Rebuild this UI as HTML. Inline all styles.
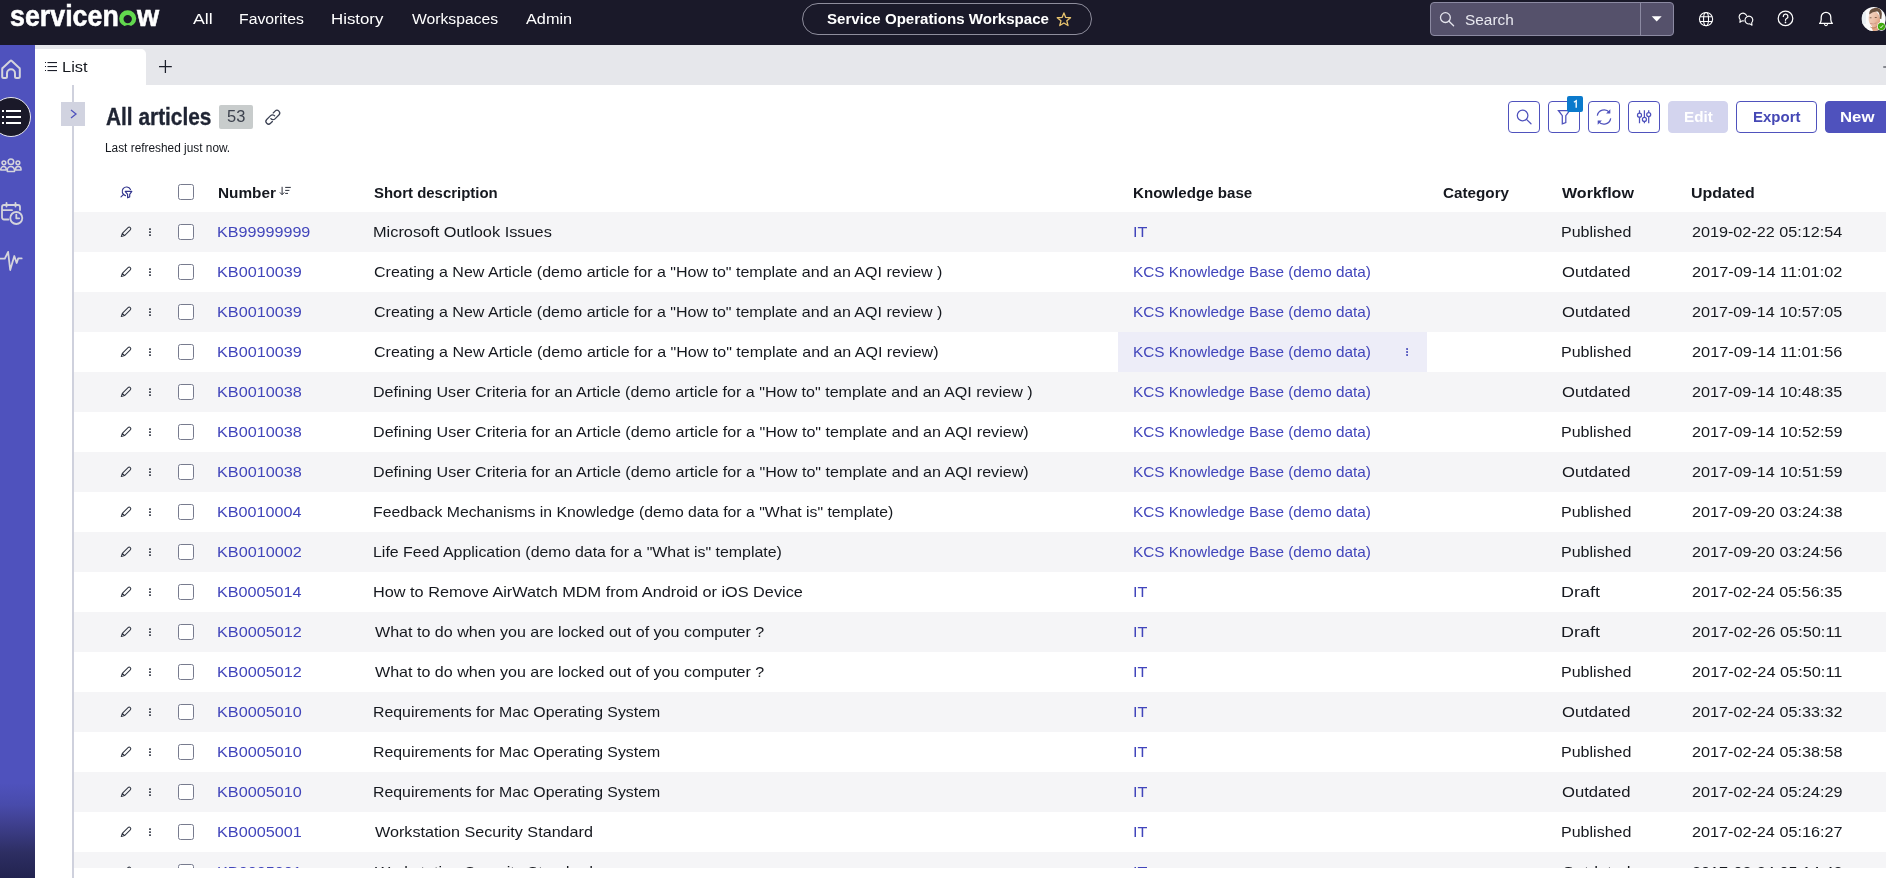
<!DOCTYPE html><html lang="en"><head><meta charset="utf-8"><title>All articles | Service Operations Workspace</title><style>
*{box-sizing:border-box;margin:0;padding:0}
html,body{width:1886px;height:878px;overflow:hidden;background:#fff;font-family:"Liberation Sans",sans-serif}
body{position:relative}
#w{position:absolute;left:0;top:0;width:1886px;height:878px;overflow:hidden;will-change:transform}
.a{position:absolute}
.t{position:absolute;white-space:pre;transform-origin:0 50%;display:block}
.i{position:absolute;overflow:visible;display:block}
#nav{left:0;top:0;width:1886px;height:45px;background:#1a1929}
#side{left:0;top:45px;width:35px;height:833px;background:linear-gradient(180deg,#4f52bd 0,#4f52bd 738px,#484bab 760px,#3f4090 778px,#2d2e62 808px,#222350 833px)}
#tabs{left:35px;top:45px;width:1851px;height:40px;background:#e6e7eb}
#tab{left:35px;top:49px;width:111px;height:36px;background:#fff;border-radius:0 5px 0 0}
#vline{left:72px;top:85px;width:2px;height:793px;background:#cfd1dd}
#tog{left:61px;top:102px;width:24px;height:24px;background:#d1d3e0}
#table{left:74px;top:172px;width:1812px;height:696px;overflow:hidden}
.row{position:absolute;left:0;width:1812px;height:40px}
.g{background:#f5f5f7}
.cb{position:absolute;width:16px;height:16px;border:1px solid #777b8e;border-radius:2.5px;background:#fff}
.btn{position:absolute;top:101px;height:32px;border:1px solid #4f52bd;border-radius:4px;background:#fff}
</style></head><body><div id="w">
<div id="nav" class="a"></div>
<span class="t" style="left:10.38px;top:0px;line-height:32px;font-size:29px;font-weight:700;color:#fff;transform:scaleX(0.9243);-webkit-text-stroke:0.55px #fff;">servicen</span>
<svg class="i" style="left:118px;top:9px;" width="20" height="19" viewBox="118 9 20 19"><path fill-rule="evenodd" fill="#62d84e" d="M119.15 18.45 A8.55 8.1 0 1 0 136.25 18.45 A8.55 8.1 0 1 0 119.15 18.45 Z M123.5 19.1 A4.2 4.2 0 1 0 131.9 19.1 A4.2 4.2 0 1 0 123.5 19.1 Z"/><path d="M123.4 27.2 Q127.9 22.6 132.6 27.2 Z" fill="#1a1929"/></svg>
<span class="t" style="left:136.60px;top:0px;line-height:32px;font-size:29px;font-weight:700;color:#fff;transform:scaleX(0.9822);-webkit-text-stroke:0.55px #fff;">w</span>
<span class="t" style="left:192.80px;top:10px;line-height:17px;font-size:15.5px;color:#fff;transform:scaleX(1.1446);">All</span>
<span class="t" style="left:239.13px;top:10px;line-height:17px;font-size:15.5px;color:#fff;transform:scaleX(1.0177);">Favorites</span>
<span class="t" style="left:331.44px;top:10px;line-height:17px;font-size:15.5px;color:#fff;transform:scaleX(1.0851);">History</span>
<span class="t" style="left:411.85px;top:10px;line-height:17px;font-size:15.5px;color:#fff;transform:scaleX(1.0125);">Workspaces</span>
<span class="t" style="left:526.40px;top:10px;line-height:17px;font-size:15.5px;color:#fff;transform:scaleX(1.0488);">Admin</span>
<div class="a" style="left:802px;top:3px;width:290px;height:32px;border:1px solid #8e8d9c;border-radius:16px"></div>
<span class="t" style="left:826.71px;top:10px;line-height:17px;font-size:15.5px;font-weight:700;color:#fff;transform:scaleX(0.9736);">Service Operations Workspace</span>
<svg class="i" style="left:1054px;top:9px;" width="22" height="22" viewBox="1054 9 22 22"><polygon points="1063.90,12.90 1065.72,17.39 1070.56,17.74 1066.85,20.86 1068.01,25.56 1063.90,23.00 1059.79,25.56 1060.95,20.86 1057.24,17.74 1062.08,17.39" fill="none" stroke="#e9c46e" stroke-width="1.3" stroke-linejoin="round"/></svg>
<div class="a" style="left:1430px;top:2px;width:244px;height:34px;border:1px solid #8c8aa2;border-radius:4px;background:#55516b"></div>
<div class="a" style="left:1640px;top:3px;width:1px;height:32px;background:#8c8aa2"></div>
<svg class="i" style="left:1436px;top:9px;" width="22" height="22" viewBox="1436 9 22 22"><circle cx="1445.4" cy="17.6" r="4.9" fill="none" stroke="#e6e6ee" stroke-width="1.3"/><path d="M1449 21.3 L1453.6 25.8" stroke="#e6e6ee" stroke-width="1.3" stroke-linecap="round"/></svg>
<svg class="i" style="left:1648px;top:12px;" width="18" height="14" viewBox="1648 12 18 14"><path d="M1651.7 16.3 H1661.7 L1656.7 21.6 Z" fill="#fff"/></svg>
<span class="t" style="left:1464.76px;top:11px;line-height:17px;font-size:15.5px;color:#e9e9f0;transform:scaleX(0.9926);">Search</span>
<svg class="i" style="left:1696px;top:9px;" width="20" height="20" viewBox="1696 9 20 20"><circle cx="1706.05" cy="19.1" r="6.6" fill="none" stroke="#fff" stroke-width="1.1"/><ellipse cx="1706.05" cy="19.1" rx="2.5" ry="6.6" fill="none" stroke="#fff" stroke-width="1.1"/><path d="M1699.9 16.7 H1712.2 M1699.9 21.5 H1712.2" fill="none" stroke="#fff" stroke-width="1.1"/></svg>
<svg class="i" style="left:1736px;top:9px;" width="20" height="20" viewBox="1736 9 20 20"><path d="M1742 20.87 L1739.9 22.3 L1740.24 19.86 A3.9 3.9 0 1 1 1742 20.87 Z" fill="#1a1929" stroke="#fff" stroke-width="1.15" stroke-linejoin="round"/><circle cx="1748.9" cy="20.1" r="4.2" fill="#1a1929" stroke="#1a1929" stroke-width="1.1"/><path d="M1751.66 22.86 L1752 25.2 L1749.91 23.87 A3.9 3.9 0 1 1 1751.66 22.86 Z" fill="#1a1929" stroke="#fff" stroke-width="1.15" stroke-linejoin="round"/></svg>
<svg class="i" style="left:1775px;top:8px;" width="22" height="22" viewBox="1775 8 22 22"><circle cx="1785.5" cy="18.4" r="7.3" fill="none" stroke="#fff" stroke-width="1.25"/><path d="M1783.3 16.5 A2.3 2.3 0 1 1 1786.6 18.5 Q1785.5 19.1 1785.5 20.3" fill="none" stroke="#fff" stroke-width="1.25" stroke-linecap="round"/><circle cx="1785.5" cy="22.4" r="0.85" fill="#fff"/></svg>
<svg class="i" style="left:1816px;top:9px;" width="20" height="20" viewBox="1816 9 20 20"><path d="M1819.6 23.4 Q1821.2 22 1821.2 19.6 V17.2 A4.8 4.8 0 0 1 1830.8 17.2 V19.6 Q1830.8 22 1832.4 23.4 Z" fill="none" stroke="#fff" stroke-width="1.25" stroke-linejoin="round" stroke-linecap="round"/><path d="M1824.6 24.6 A1.5 1.5 0 0 0 1827.4 24.6" fill="none" stroke="#fff" stroke-width="1.25" stroke-linejoin="round" stroke-linecap="round"/></svg>
<svg class="i" style="left:1858px;top:4px;" width="28" height="32" viewBox="1858 4 28 32"><defs><clipPath id="avc"><circle cx="1873.7" cy="19" r="12"/></clipPath><filter id="avb" x="-20%" y="-20%" width="140%" height="140%"><feGaussianBlur stdDeviation="0.45"/></filter><linearGradient id="avs" x1="0" y1="0" x2="1" y2="1"><stop offset="0" stop-color="#f6dccd"/><stop offset="0.6" stop-color="#e9b99f"/><stop offset="1" stop-color="#cf8a63"/></linearGradient></defs><g clip-path="url(#avc)"><rect x="1860" y="5" width="28" height="28" fill="#fafafa"/><g filter="url(#avb)"><rect x="1862" y="12" width="4" height="12" fill="#e8eef2"/><path d="M1872.3 26 L1878.4 24.5 L1879.2 33 L1871.6 33 Z" fill="#dea27e"/><path d="M1864 33 L1866 29.5 L1872 28.5 L1873.5 33 Z" fill="#fdfdfd"/><ellipse cx="1874.3" cy="19.3" rx="5.7" ry="8.3" transform="rotate(-9 1874.3 19.3)" fill="url(#avs)"/><path d="M1869.2 14.4 Q1868.8 8.6 1874.6 7.9 Q1881.4 7.4 1881.9 13.8 L1881.3 19.2 L1879.7 18.6 Q1880.1 13.4 1877.6 11.6 Q1873.2 11.2 1869.2 14.4 Z" fill="#6b5140"/><ellipse cx="1870.6" cy="17.8" rx="1.1" ry="0.55" fill="#7a5a48"/><ellipse cx="1875.8" cy="17.5" rx="1.2" ry="0.55" fill="#7a5a48"/><path d="M1870.2 23.4 Q1873 25.9 1876.4 23 Q1873 24.2 1870.2 23.4 Z" fill="#fff" stroke="#c27f68" stroke-width="0.5"/><path d="M1870.4 27 Q1873.4 29.6 1877.6 26" fill="none" stroke="#b9805f" stroke-width="0.9"/></g></g><circle cx="1881.45" cy="26.4" r="4.3" fill="#fff"/><circle cx="1881.45" cy="26.4" r="3.6" fill="#3fa80d"/><path d="M1880 26.7 L1881 27.7 L1883 25.3" fill="none" stroke="#fff" stroke-width="0.95"/></svg>
<div id="side" class="a"></div>
<svg class="i" style="left:0px;top:0px;" width="35" height="140" viewBox="0 0 35 140"><path d="M2.2 76.4 V68.9 Q2.2 68.3 2.7 67.9 L10.2 60.9 Q11 60.2 11.8 60.9 L19.3 67.9 Q19.8 68.3 19.8 68.9 V76.4 Q19.8 77.9 18.3 77.9 H16.5 Q15 77.9 15 76.4 V73.2 A4 4 0 0 0 7 73.2 V76.4 Q7 77.9 5.5 77.9 H3.7 Q2.2 77.9 2.2 76.4 Z" fill="none" stroke="#d4d4dc" stroke-width="2" stroke-linejoin="round"/></svg>
<svg class="i" style="left:0px;top:90px;" width="35" height="60" viewBox="0 90 35 60"><circle cx="11" cy="117" r="19.5" fill="#1a1929" stroke="#e8e8f0" stroke-width="1"/><rect x="2" y="110" width="2" height="2" fill="#fff"/><rect x="6" y="110" width="15" height="2" fill="#fff"/><rect x="2" y="116" width="2" height="2" fill="#fff"/><rect x="6" y="116" width="15" height="2" fill="#fff"/><rect x="2" y="122" width="2" height="2" fill="#fff"/><rect x="6" y="122" width="15" height="2" fill="#fff"/></svg>
<svg class="i" style="left:0px;top:150px;" width="35" height="30" viewBox="0 150 35 30"><circle cx="3.9" cy="162.8" r="1.9" fill="#4f52bd" stroke="#d4d4dc" stroke-width="1.5" stroke-linejoin="round" stroke-linecap="round"/><circle cx="17.9" cy="162.8" r="1.9" fill="#4f52bd" stroke="#d4d4dc" stroke-width="1.5" stroke-linejoin="round" stroke-linecap="round"/><path d="M0.75 169.9 V169.35 A2.75 2.75 0 0 1 6.25 169.35 V169.9 Z" fill="#4f52bd" stroke="#d4d4dc" stroke-width="1.5" stroke-linejoin="round" stroke-linecap="round"/><path d="M15.55 169.9 V169.35 A2.75 2.75 0 0 1 21.05 169.35 V169.9 Z" fill="#4f52bd" stroke="#d4d4dc" stroke-width="1.5" stroke-linejoin="round" stroke-linecap="round"/><circle cx="10.9" cy="161.8" r="2.8" fill="#4f52bd" stroke="#d4d4dc" stroke-width="1.5" stroke-linejoin="round" stroke-linecap="round"/><path d="M7.3 171.5 V170.2 A3.6 3.6 0 0 1 14.5 170.2 V171.5 Z" fill="#4f52bd" stroke="#d4d4dc" stroke-width="1.5" stroke-linejoin="round" stroke-linecap="round"/></svg>
<svg class="i" style="left:0px;top:198px;" width="35" height="30" viewBox="0 198 35 30"><path d="M8.5 219.5 H4 A2 2 0 0 1 2 217.5 V207 A2 2 0 0 1 4 205 H18 A2 2 0 0 1 20 207 V210 M2 210.2 H12 M6.5 202.8 V206.5 M15.5 202.8 V206.5" fill="none" stroke="#d4d4dc" stroke-width="1.8" stroke-linejoin="round" stroke-linecap="round"/><circle cx="16.3" cy="218" r="6" fill="none" stroke="#d4d4dc" stroke-width="1.8" stroke-linejoin="round" stroke-linecap="round"/><path d="M16.3 214.6 V218.3 H19.2" fill="none" stroke="#d4d4dc" stroke-width="1.8" stroke-linejoin="round" stroke-linecap="round"/></svg>
<svg class="i" style="left:0px;top:248px;" width="35" height="26" viewBox="0 248 35 26"><path d="M0 258.7 H4.8 L8.1 251.9 L10.2 270 L14.3 256 L16.7 263 L18.2 258.4 H21.7" fill="none" stroke="#d4d4dc" stroke-width="1.8" stroke-linejoin="round" stroke-linecap="round"/></svg>
<div id="tabs" class="a"></div><div id="tab" class="a"></div>
<svg class="i" style="left:40px;top:58px;" width="24" height="18" viewBox="40 58 24 18"><rect x="45" y="62.0" width="1" height="1" fill="#1c1f2b"/><rect x="47.5" y="62.0" width="9.5" height="1.1" fill="#1c1f2b"/><rect x="45" y="66.0" width="1" height="1" fill="#1c1f2b"/><rect x="47.5" y="66.0" width="9.5" height="1.1" fill="#1c1f2b"/><rect x="45" y="70.0" width="1" height="1" fill="#1c1f2b"/><rect x="47.5" y="70.0" width="9.5" height="1.1" fill="#1c1f2b"/></svg>
<span class="t" style="left:62.43px;top:58px;line-height:17px;font-size:15px;color:#15181e;transform:scaleX(1.0955);">List</span>
<svg class="i" style="left:155px;top:56px;" width="22" height="22" viewBox="155 56 22 22"><path d="M159 66.5 H171.8 M165.4 60.1 V72.9" stroke="#1c1f2b" stroke-width="1.25" fill="none"/></svg>
<div class="a" style="left:1883px;top:66px;width:4px;height:2px;border-radius:1px;background:#85878e"></div>
<div id="vline" class="a"></div><div id="tog" class="a"></div>
<svg class="i" style="left:61px;top:102px;" width="24" height="24" viewBox="0 0 24 24"><path d="M10 8 L15 12 L10 16" fill="none" stroke="#4f52bd" stroke-width="1.3"/></svg>
<span class="t" style="left:105.85px;top:103px;line-height:27px;font-size:24px;font-weight:700;color:#1f2433;transform:scaleX(0.8685);-webkit-text-stroke:0.35px #1f2433;">All articles</span>
<div class="a" style="left:219px;top:105px;width:34px;height:24px;border-radius:2px;background:#c8cccc"></div>
<span class="t" style="left:226.93px;top:108px;line-height:17px;font-size:16px;color:#3d424e;transform:scaleX(1.0277);">53</span>
<svg class="i" style="left:262px;top:106px;" width="22" height="22" viewBox="262 106 22 22"><g transform="translate(272.8 117.2) rotate(-45)"><path d="M-2.3 -0.4 A2.7 2.7 0 0 0 0.4 2.7 H5.9 A2.7 2.7 0 0 0 5.9 -2.7 H3.3" fill="none" stroke="#3b4153" stroke-width="1.25" stroke-linecap="round"/><path d="M2.3 0.4 A2.7 2.7 0 0 0 -0.4 -2.7 H-5.9 A2.7 2.7 0 0 0 -5.9 2.7 H-3.3" fill="none" stroke="#3b4153" stroke-width="1.25" stroke-linecap="round"/></g></svg>
<span class="t" style="left:105.41px;top:141px;line-height:14px;font-size:12px;color:#15181e;transform:scaleX(0.9876);">Last refreshed just now.</span>
<div class="btn" style="left:1508px;width:32px"></div>
<div class="btn" style="left:1548px;width:32px"></div>
<div class="btn" style="left:1588px;width:32px"></div>
<div class="btn" style="left:1628px;width:32px"></div>
<svg class="i" style="left:1508px;top:101px;" width="32" height="32" viewBox="0 0 32 32"><circle cx="14.6" cy="14.5" r="5.3" fill="none" stroke="#4f52bd" stroke-width="1.25"/><path d="M18.5 18.4 L23 22.8" stroke="#4f52bd" stroke-width="1.25" stroke-linecap="round"/></svg>
<svg class="i" style="left:1548px;top:101px;" width="32" height="32" viewBox="0 0 32 32"><path d="M10.4 9.5 H21.6 L17.8 14.6 V21.5 L14.3 22.8 V14.6 Z" fill="none" stroke="#4f52bd" stroke-width="1.25" stroke-linejoin="miter"/></svg>
<svg class="i" style="left:1588px;top:101px;" width="32" height="32" viewBox="0 0 32 32"><path d="M9.3 14.6 A6.9 6.9 0 0 1 21.4 11.3" fill="none" stroke="#4f52bd" stroke-width="1.25"/><path d="M22.7 17.4 A6.9 6.9 0 0 1 10.6 20.7" fill="none" stroke="#4f52bd" stroke-width="1.25"/><path d="M22.3 8.2 V12.4 H18.1 Z" fill="#4f52bd"/><path d="M9.7 23.8 V19.6 H13.9 Z" fill="#4f52bd"/></svg>
<svg class="i" style="left:1628px;top:101px;" width="32" height="32" viewBox="0 0 32 32"><path d="M11.5 9.3 V22.3 M16.4 9.3 V22.3 M20.7 9.3 V22.3" fill="none" stroke="#4f52bd" stroke-width="1.25"/><circle cx="11.5" cy="14.2" r="2" fill="#fff" stroke="#4f52bd" stroke-width="1.25"/><circle cx="16.4" cy="18.4" r="2" fill="#fff" stroke="#4f52bd" stroke-width="1.25"/><circle cx="20.7" cy="13.6" r="2" fill="#fff" stroke="#4f52bd" stroke-width="1.25"/></svg>
<div class="a" style="left:1567px;top:96px;width:16px;height:16px;border-radius:2px;background:#0b7acc"></div>
<svg class="i" style="left:1567px;top:96px" width="16" height="16" viewBox="0 0 16 16"><path d="M6.9 6.2 L9.2 4.7 V11.7" fill="none" stroke="#fff" stroke-width="1.35"/></svg>
<div class="btn" style="left:1668px;width:60px;border-color:#d3d4ee;background:#d3d4ee"></div>
<span class="t" style="left:1683.72px;top:108px;line-height:17px;font-size:15.5px;font-weight:700;color:#fff;transform:scaleX(0.9821);">Edit</span>
<div class="btn" style="left:1736px;width:81px"></div>
<span class="t" style="left:1752.63px;top:108px;line-height:17px;font-size:15.5px;font-weight:700;color:#4548b5;transform:scaleX(0.9667);">Export</span>
<div class="btn" style="left:1825px;width:66px;background:#4f52bd"></div>
<span class="t" style="left:1840.42px;top:108px;line-height:17px;font-size:15.5px;font-weight:700;color:#fff;transform:scaleX(1.0797);">New</span>
<div id="table" class="a">
<span class="t" style="left:143.68px;top:12px;line-height:17px;font-size:15px;font-weight:700;color:#15181f;transform:scaleX(1.0234);">Number</span>
<span class="t" style="left:299.60px;top:12px;line-height:17px;font-size:15px;font-weight:700;color:#15181f;transform:scaleX(0.9963);">Short description</span>
<span class="t" style="left:1058.99px;top:12px;line-height:17px;font-size:15px;font-weight:700;color:#15181f;transform:scaleX(1.0073);">Knowledge base</span>
<span class="t" style="left:1368.54px;top:12px;line-height:17px;font-size:15px;font-weight:700;color:#15181f;transform:scaleX(1.0156);">Category</span>
<span class="t" style="left:1488.00px;top:12px;line-height:17px;font-size:15px;font-weight:700;color:#15181f;transform:scaleX(1.0691);">Workflow</span>
<span class="t" style="left:1617.34px;top:12px;line-height:17px;font-size:15px;font-weight:700;color:#15181f;transform:scaleX(1.0621);">Updated</span>
<div class="cb" style="left:104px;top:12px"></div>
<div class="row g" style="top:40px"></div>
<div class="cb" style="left:104px;top:52px"></div>
<span class="t" style="left:143.45px;top:51px;line-height:17px;font-size:15px;color:#4145bb;transform:scaleX(1.0761);">KB99999999</span>
<span class="t" style="left:299.24px;top:51px;line-height:17px;font-size:15px;color:#15181e;transform:scaleX(1.0892);">Microsoft Outlook Issues</span>
<span class="t" style="left:1058.98px;top:51px;line-height:17px;font-size:15px;color:#4145bb;transform:scaleX(1.0783);">IT</span>
<span class="t" style="left:1487.26px;top:51px;line-height:17px;font-size:15px;color:#15181e;transform:scaleX(1.0682);">Published</span>
<span class="t" style="left:1617.99px;top:51px;line-height:17px;font-size:15px;color:#15181e;transform:scaleX(1.0783);">2019-02-22 05:12:54</span>
<div class="row" style="top:80px"></div>
<div class="cb" style="left:104px;top:92px"></div>
<span class="t" style="left:143.45px;top:91px;line-height:17px;font-size:15px;color:#4145bb;transform:scaleX(1.0824);">KB0010039</span>
<span class="t" style="left:299.80px;top:91px;line-height:17px;font-size:15px;color:#15181e;transform:scaleX(1.0674);">Creating a New Article (demo article for a "How to" template and an AQI review )</span>
<span class="t" style="left:1059.22px;top:91px;line-height:17px;font-size:15px;color:#4145bb;transform:scaleX(1.0226);">KCS Knowledge Base (demo data)</span>
<span class="t" style="left:1487.77px;top:91px;line-height:17px;font-size:15px;color:#15181e;transform:scaleX(1.1100);">Outdated</span>
<span class="t" style="left:1617.98px;top:91px;line-height:17px;font-size:15px;color:#15181e;transform:scaleX(1.0881);">2017-09-14 11:01:02</span>
<div class="row g" style="top:120px"></div>
<div class="cb" style="left:104px;top:132px"></div>
<span class="t" style="left:143.45px;top:131px;line-height:17px;font-size:15px;color:#4145bb;transform:scaleX(1.0824);">KB0010039</span>
<span class="t" style="left:299.80px;top:131px;line-height:17px;font-size:15px;color:#15181e;transform:scaleX(1.0674);">Creating a New Article (demo article for a "How to" template and an AQI review )</span>
<span class="t" style="left:1059.22px;top:131px;line-height:17px;font-size:15px;color:#4145bb;transform:scaleX(1.0226);">KCS Knowledge Base (demo data)</span>
<span class="t" style="left:1487.77px;top:131px;line-height:17px;font-size:15px;color:#15181e;transform:scaleX(1.1100);">Outdated</span>
<span class="t" style="left:1617.99px;top:131px;line-height:17px;font-size:15px;color:#15181e;transform:scaleX(1.0783);">2017-09-14 10:57:05</span>
<div class="row" style="top:160px"></div>
<div class="a" style="left:1044px;top:160px;width:309px;height:40px;background:#ededf8"></div>
<div class="cb" style="left:104px;top:172px"></div>
<span class="t" style="left:143.45px;top:171px;line-height:17px;font-size:15px;color:#4145bb;transform:scaleX(1.0824);">KB0010039</span>
<span class="t" style="left:299.80px;top:171px;line-height:17px;font-size:15px;color:#15181e;transform:scaleX(1.0684);">Creating a New Article (demo article for a "How to" template and an AQI review)</span>
<span class="t" style="left:1059.22px;top:171px;line-height:17px;font-size:15px;color:#4145bb;transform:scaleX(1.0226);">KCS Knowledge Base (demo data)</span>
<span class="t" style="left:1487.26px;top:171px;line-height:17px;font-size:15px;color:#15181e;transform:scaleX(1.0682);">Published</span>
<span class="t" style="left:1617.98px;top:171px;line-height:17px;font-size:15px;color:#15181e;transform:scaleX(1.0881);">2017-09-14 11:01:56</span>
<div class="row g" style="top:200px"></div>
<div class="cb" style="left:104px;top:212px"></div>
<span class="t" style="left:143.45px;top:211px;line-height:17px;font-size:15px;color:#4145bb;transform:scaleX(1.0824);">KB0010038</span>
<span class="t" style="left:299.26px;top:211px;line-height:17px;font-size:15px;color:#15181e;transform:scaleX(1.0724);">Defining User Criteria for an Article (demo article for a "How to" template and an AQI review )</span>
<span class="t" style="left:1059.22px;top:211px;line-height:17px;font-size:15px;color:#4145bb;transform:scaleX(1.0226);">KCS Knowledge Base (demo data)</span>
<span class="t" style="left:1487.77px;top:211px;line-height:17px;font-size:15px;color:#15181e;transform:scaleX(1.1100);">Outdated</span>
<span class="t" style="left:1617.99px;top:211px;line-height:17px;font-size:15px;color:#15181e;transform:scaleX(1.0783);">2017-09-14 10:48:35</span>
<div class="row" style="top:240px"></div>
<div class="cb" style="left:104px;top:252px"></div>
<span class="t" style="left:143.45px;top:251px;line-height:17px;font-size:15px;color:#4145bb;transform:scaleX(1.0824);">KB0010038</span>
<span class="t" style="left:299.26px;top:251px;line-height:17px;font-size:15px;color:#15181e;transform:scaleX(1.0733);">Defining User Criteria for an Article (demo article for a "How to" template and an AQI review)</span>
<span class="t" style="left:1059.22px;top:251px;line-height:17px;font-size:15px;color:#4145bb;transform:scaleX(1.0226);">KCS Knowledge Base (demo data)</span>
<span class="t" style="left:1487.26px;top:251px;line-height:17px;font-size:15px;color:#15181e;transform:scaleX(1.0682);">Published</span>
<span class="t" style="left:1617.99px;top:251px;line-height:17px;font-size:15px;color:#15181e;transform:scaleX(1.0802);">2017-09-14 10:52:59</span>
<div class="row g" style="top:280px"></div>
<div class="cb" style="left:104px;top:292px"></div>
<span class="t" style="left:143.45px;top:291px;line-height:17px;font-size:15px;color:#4145bb;transform:scaleX(1.0824);">KB0010038</span>
<span class="t" style="left:299.26px;top:291px;line-height:17px;font-size:15px;color:#15181e;transform:scaleX(1.0733);">Defining User Criteria for an Article (demo article for a "How to" template and an AQI review)</span>
<span class="t" style="left:1059.22px;top:291px;line-height:17px;font-size:15px;color:#4145bb;transform:scaleX(1.0226);">KCS Knowledge Base (demo data)</span>
<span class="t" style="left:1487.77px;top:291px;line-height:17px;font-size:15px;color:#15181e;transform:scaleX(1.1100);">Outdated</span>
<span class="t" style="left:1617.99px;top:291px;line-height:17px;font-size:15px;color:#15181e;transform:scaleX(1.0802);">2017-09-14 10:51:59</span>
<div class="row" style="top:320px"></div>
<div class="cb" style="left:104px;top:332px"></div>
<span class="t" style="left:143.45px;top:331px;line-height:17px;font-size:15px;color:#4145bb;transform:scaleX(1.0788);">KB0010004</span>
<span class="t" style="left:299.28px;top:331px;line-height:17px;font-size:15px;color:#15181e;transform:scaleX(1.0526);">Feedback Mechanisms in Knowledge (demo data for a "What is" template)</span>
<span class="t" style="left:1059.22px;top:331px;line-height:17px;font-size:15px;color:#4145bb;transform:scaleX(1.0226);">KCS Knowledge Base (demo data)</span>
<span class="t" style="left:1487.26px;top:331px;line-height:17px;font-size:15px;color:#15181e;transform:scaleX(1.0682);">Published</span>
<span class="t" style="left:1617.99px;top:331px;line-height:17px;font-size:15px;color:#15181e;transform:scaleX(1.0802);">2017-09-20 03:24:38</span>
<div class="row g" style="top:360px"></div>
<div class="cb" style="left:104px;top:372px"></div>
<span class="t" style="left:143.45px;top:371px;line-height:17px;font-size:15px;color:#4145bb;transform:scaleX(1.0824);">KB0010002</span>
<span class="t" style="left:299.27px;top:371px;line-height:17px;font-size:15px;color:#15181e;transform:scaleX(1.0621);">Life Feed Application (demo data for a "What is" template)</span>
<span class="t" style="left:1059.22px;top:371px;line-height:17px;font-size:15px;color:#4145bb;transform:scaleX(1.0226);">KCS Knowledge Base (demo data)</span>
<span class="t" style="left:1487.26px;top:371px;line-height:17px;font-size:15px;color:#15181e;transform:scaleX(1.0682);">Published</span>
<span class="t" style="left:1617.99px;top:371px;line-height:17px;font-size:15px;color:#15181e;transform:scaleX(1.0802);">2017-09-20 03:24:56</span>
<div class="row" style="top:400px"></div>
<div class="cb" style="left:104px;top:412px"></div>
<span class="t" style="left:143.45px;top:411px;line-height:17px;font-size:15px;color:#4145bb;transform:scaleX(1.0788);">KB0005014</span>
<span class="t" style="left:299.24px;top:411px;line-height:17px;font-size:15px;color:#15181e;transform:scaleX(1.0848);">How to Remove AirWatch MDM from Android or iOS Device</span>
<span class="t" style="left:1058.98px;top:411px;line-height:17px;font-size:15px;color:#4145bb;transform:scaleX(1.0783);">IT</span>
<span class="t" style="left:1487.10px;top:411px;line-height:17px;font-size:15px;color:#15181e;transform:scaleX(1.1968);">Draft</span>
<span class="t" style="left:1617.99px;top:411px;line-height:17px;font-size:15px;color:#15181e;transform:scaleX(1.0783);">2017-02-24 05:56:35</span>
<div class="row g" style="top:440px"></div>
<div class="cb" style="left:104px;top:452px"></div>
<span class="t" style="left:143.45px;top:451px;line-height:17px;font-size:15px;color:#4145bb;transform:scaleX(1.0824);">KB0005012</span>
<span class="t" style="left:300.60px;top:451px;line-height:17px;font-size:15px;color:#15181e;transform:scaleX(1.0708);">What to do when you are locked out of you computer ?</span>
<span class="t" style="left:1058.98px;top:451px;line-height:17px;font-size:15px;color:#4145bb;transform:scaleX(1.0783);">IT</span>
<span class="t" style="left:1487.10px;top:451px;line-height:17px;font-size:15px;color:#15181e;transform:scaleX(1.1968);">Draft</span>
<span class="t" style="left:1617.98px;top:451px;line-height:17px;font-size:15px;color:#15181e;transform:scaleX(1.0881);">2017-02-26 05:50:11</span>
<div class="row" style="top:480px"></div>
<div class="cb" style="left:104px;top:492px"></div>
<span class="t" style="left:143.45px;top:491px;line-height:17px;font-size:15px;color:#4145bb;transform:scaleX(1.0824);">KB0005012</span>
<span class="t" style="left:300.60px;top:491px;line-height:17px;font-size:15px;color:#15181e;transform:scaleX(1.0708);">What to do when you are locked out of you computer ?</span>
<span class="t" style="left:1058.98px;top:491px;line-height:17px;font-size:15px;color:#4145bb;transform:scaleX(1.0783);">IT</span>
<span class="t" style="left:1487.26px;top:491px;line-height:17px;font-size:15px;color:#15181e;transform:scaleX(1.0682);">Published</span>
<span class="t" style="left:1617.98px;top:491px;line-height:17px;font-size:15px;color:#15181e;transform:scaleX(1.0881);">2017-02-24 05:50:11</span>
<div class="row g" style="top:520px"></div>
<div class="cb" style="left:104px;top:532px"></div>
<span class="t" style="left:143.45px;top:531px;line-height:17px;font-size:15px;color:#4145bb;transform:scaleX(1.0824);">KB0005010</span>
<span class="t" style="left:299.28px;top:531px;line-height:17px;font-size:15px;color:#15181e;transform:scaleX(1.0568);">Requirements for Mac Operating System</span>
<span class="t" style="left:1058.98px;top:531px;line-height:17px;font-size:15px;color:#4145bb;transform:scaleX(1.0783);">IT</span>
<span class="t" style="left:1487.77px;top:531px;line-height:17px;font-size:15px;color:#15181e;transform:scaleX(1.1100);">Outdated</span>
<span class="t" style="left:1617.99px;top:531px;line-height:17px;font-size:15px;color:#15181e;transform:scaleX(1.0802);">2017-02-24 05:33:32</span>
<div class="row" style="top:560px"></div>
<div class="cb" style="left:104px;top:572px"></div>
<span class="t" style="left:143.45px;top:571px;line-height:17px;font-size:15px;color:#4145bb;transform:scaleX(1.0824);">KB0005010</span>
<span class="t" style="left:299.28px;top:571px;line-height:17px;font-size:15px;color:#15181e;transform:scaleX(1.0568);">Requirements for Mac Operating System</span>
<span class="t" style="left:1058.98px;top:571px;line-height:17px;font-size:15px;color:#4145bb;transform:scaleX(1.0783);">IT</span>
<span class="t" style="left:1487.26px;top:571px;line-height:17px;font-size:15px;color:#15181e;transform:scaleX(1.0682);">Published</span>
<span class="t" style="left:1617.99px;top:571px;line-height:17px;font-size:15px;color:#15181e;transform:scaleX(1.0802);">2017-02-24 05:38:58</span>
<div class="row g" style="top:600px"></div>
<div class="cb" style="left:104px;top:612px"></div>
<span class="t" style="left:143.45px;top:611px;line-height:17px;font-size:15px;color:#4145bb;transform:scaleX(1.0824);">KB0005010</span>
<span class="t" style="left:299.28px;top:611px;line-height:17px;font-size:15px;color:#15181e;transform:scaleX(1.0568);">Requirements for Mac Operating System</span>
<span class="t" style="left:1058.98px;top:611px;line-height:17px;font-size:15px;color:#4145bb;transform:scaleX(1.0783);">IT</span>
<span class="t" style="left:1487.77px;top:611px;line-height:17px;font-size:15px;color:#15181e;transform:scaleX(1.1100);">Outdated</span>
<span class="t" style="left:1617.99px;top:611px;line-height:17px;font-size:15px;color:#15181e;transform:scaleX(1.0802);">2017-02-24 05:24:29</span>
<div class="row" style="top:640px"></div>
<div class="cb" style="left:104px;top:652px"></div>
<span class="t" style="left:143.45px;top:651px;line-height:17px;font-size:15px;color:#4145bb;transform:scaleX(1.0824);">KB0005001</span>
<span class="t" style="left:300.60px;top:651px;line-height:17px;font-size:15px;color:#15181e;transform:scaleX(1.0773);">Workstation Security Standard</span>
<span class="t" style="left:1058.98px;top:651px;line-height:17px;font-size:15px;color:#4145bb;transform:scaleX(1.0783);">IT</span>
<span class="t" style="left:1487.26px;top:651px;line-height:17px;font-size:15px;color:#15181e;transform:scaleX(1.0682);">Published</span>
<span class="t" style="left:1617.99px;top:651px;line-height:17px;font-size:15px;color:#15181e;transform:scaleX(1.0802);">2017-02-24 05:16:27</span>
<div class="row g" style="top:680px"></div>
<div class="cb" style="left:104px;top:692px"></div>
<span class="t" style="left:143.45px;top:691px;line-height:17px;font-size:15px;color:#4145bb;transform:scaleX(1.0824);">KB0005001</span>
<span class="t" style="left:300.60px;top:691px;line-height:17px;font-size:15px;color:#15181e;transform:scaleX(1.0773);">Workstation Security Standard</span>
<span class="t" style="left:1058.98px;top:691px;line-height:17px;font-size:15px;color:#4145bb;transform:scaleX(1.0783);">IT</span>
<span class="t" style="left:1487.77px;top:691px;line-height:17px;font-size:15px;color:#15181e;transform:scaleX(1.1100);">Outdated</span>
<span class="t" style="left:1617.99px;top:691px;line-height:17px;font-size:15px;color:#15181e;transform:scaleX(1.0802);">2017-02-24 05:14:42</span>
<svg class="i" style="left:0;top:0" width="1812" height="720" viewBox="0 0 1812 720"><g transform="translate(47.1 64.75) rotate(-45)"><path d="M0.2 0 L3.3 -1.6 H11.4 A1.6 1.6 0 0 1 11.4 1.6 H3.3 Z M3.3 -1.6 V1.6" fill="none" stroke="#2e3340" stroke-width="1" stroke-linejoin="round"/></g><rect x="75.1" y="56.29999999999999" width="1.8" height="1.8" rx="0.3" fill="#3a3f4c"/><rect x="75.1" y="59.29999999999999" width="1.8" height="1.8" rx="0.3" fill="#3a3f4c"/><rect x="75.1" y="62.29999999999999" width="1.8" height="1.8" rx="0.3" fill="#3a3f4c"/><g transform="translate(47.1 104.75) rotate(-45)"><path d="M0.2 0 L3.3 -1.6 H11.4 A1.6 1.6 0 0 1 11.4 1.6 H3.3 Z M3.3 -1.6 V1.6" fill="none" stroke="#2e3340" stroke-width="1" stroke-linejoin="round"/></g><rect x="75.1" y="96.29999999999998" width="1.8" height="1.8" rx="0.3" fill="#3a3f4c"/><rect x="75.1" y="99.29999999999998" width="1.8" height="1.8" rx="0.3" fill="#3a3f4c"/><rect x="75.1" y="102.29999999999998" width="1.8" height="1.8" rx="0.3" fill="#3a3f4c"/><g transform="translate(47.1 144.75) rotate(-45)"><path d="M0.2 0 L3.3 -1.6 H11.4 A1.6 1.6 0 0 1 11.4 1.6 H3.3 Z M3.3 -1.6 V1.6" fill="none" stroke="#2e3340" stroke-width="1" stroke-linejoin="round"/></g><rect x="75.1" y="136.29999999999998" width="1.8" height="1.8" rx="0.3" fill="#3a3f4c"/><rect x="75.1" y="139.29999999999998" width="1.8" height="1.8" rx="0.3" fill="#3a3f4c"/><rect x="75.1" y="142.29999999999998" width="1.8" height="1.8" rx="0.3" fill="#3a3f4c"/><rect x="1332.1999999999998" y="176.1" width="1.8" height="1.8" rx="0.3" fill="#4f52bd"/><rect x="1332.1999999999998" y="179.1" width="1.8" height="1.8" rx="0.3" fill="#4f52bd"/><rect x="1332.1999999999998" y="182.1" width="1.8" height="1.8" rx="0.3" fill="#4f52bd"/><g transform="translate(47.1 184.75) rotate(-45)"><path d="M0.2 0 L3.3 -1.6 H11.4 A1.6 1.6 0 0 1 11.4 1.6 H3.3 Z M3.3 -1.6 V1.6" fill="none" stroke="#2e3340" stroke-width="1" stroke-linejoin="round"/></g><rect x="75.1" y="176.29999999999998" width="1.8" height="1.8" rx="0.3" fill="#3a3f4c"/><rect x="75.1" y="179.29999999999998" width="1.8" height="1.8" rx="0.3" fill="#3a3f4c"/><rect x="75.1" y="182.29999999999998" width="1.8" height="1.8" rx="0.3" fill="#3a3f4c"/><g transform="translate(47.1 224.75) rotate(-45)"><path d="M0.2 0 L3.3 -1.6 H11.4 A1.6 1.6 0 0 1 11.4 1.6 H3.3 Z M3.3 -1.6 V1.6" fill="none" stroke="#2e3340" stroke-width="1" stroke-linejoin="round"/></g><rect x="75.1" y="216.29999999999998" width="1.8" height="1.8" rx="0.3" fill="#3a3f4c"/><rect x="75.1" y="219.29999999999998" width="1.8" height="1.8" rx="0.3" fill="#3a3f4c"/><rect x="75.1" y="222.29999999999998" width="1.8" height="1.8" rx="0.3" fill="#3a3f4c"/><g transform="translate(47.1 264.75) rotate(-45)"><path d="M0.2 0 L3.3 -1.6 H11.4 A1.6 1.6 0 0 1 11.4 1.6 H3.3 Z M3.3 -1.6 V1.6" fill="none" stroke="#2e3340" stroke-width="1" stroke-linejoin="round"/></g><rect x="75.1" y="256.3" width="1.8" height="1.8" rx="0.3" fill="#3a3f4c"/><rect x="75.1" y="259.3" width="1.8" height="1.8" rx="0.3" fill="#3a3f4c"/><rect x="75.1" y="262.3" width="1.8" height="1.8" rx="0.3" fill="#3a3f4c"/><g transform="translate(47.1 304.75) rotate(-45)"><path d="M0.2 0 L3.3 -1.6 H11.4 A1.6 1.6 0 0 1 11.4 1.6 H3.3 Z M3.3 -1.6 V1.6" fill="none" stroke="#2e3340" stroke-width="1" stroke-linejoin="round"/></g><rect x="75.1" y="296.3" width="1.8" height="1.8" rx="0.3" fill="#3a3f4c"/><rect x="75.1" y="299.3" width="1.8" height="1.8" rx="0.3" fill="#3a3f4c"/><rect x="75.1" y="302.3" width="1.8" height="1.8" rx="0.3" fill="#3a3f4c"/><g transform="translate(47.1 344.75) rotate(-45)"><path d="M0.2 0 L3.3 -1.6 H11.4 A1.6 1.6 0 0 1 11.4 1.6 H3.3 Z M3.3 -1.6 V1.6" fill="none" stroke="#2e3340" stroke-width="1" stroke-linejoin="round"/></g><rect x="75.1" y="336.30000000000007" width="1.8" height="1.8" rx="0.3" fill="#3a3f4c"/><rect x="75.1" y="339.30000000000007" width="1.8" height="1.8" rx="0.3" fill="#3a3f4c"/><rect x="75.1" y="342.30000000000007" width="1.8" height="1.8" rx="0.3" fill="#3a3f4c"/><g transform="translate(47.1 384.75) rotate(-45)"><path d="M0.2 0 L3.3 -1.6 H11.4 A1.6 1.6 0 0 1 11.4 1.6 H3.3 Z M3.3 -1.6 V1.6" fill="none" stroke="#2e3340" stroke-width="1" stroke-linejoin="round"/></g><rect x="75.1" y="376.30000000000007" width="1.8" height="1.8" rx="0.3" fill="#3a3f4c"/><rect x="75.1" y="379.30000000000007" width="1.8" height="1.8" rx="0.3" fill="#3a3f4c"/><rect x="75.1" y="382.30000000000007" width="1.8" height="1.8" rx="0.3" fill="#3a3f4c"/><g transform="translate(47.1 424.75) rotate(-45)"><path d="M0.2 0 L3.3 -1.6 H11.4 A1.6 1.6 0 0 1 11.4 1.6 H3.3 Z M3.3 -1.6 V1.6" fill="none" stroke="#2e3340" stroke-width="1" stroke-linejoin="round"/></g><rect x="75.1" y="416.30000000000007" width="1.8" height="1.8" rx="0.3" fill="#3a3f4c"/><rect x="75.1" y="419.30000000000007" width="1.8" height="1.8" rx="0.3" fill="#3a3f4c"/><rect x="75.1" y="422.30000000000007" width="1.8" height="1.8" rx="0.3" fill="#3a3f4c"/><g transform="translate(47.1 464.75) rotate(-45)"><path d="M0.2 0 L3.3 -1.6 H11.4 A1.6 1.6 0 0 1 11.4 1.6 H3.3 Z M3.3 -1.6 V1.6" fill="none" stroke="#2e3340" stroke-width="1" stroke-linejoin="round"/></g><rect x="75.1" y="456.30000000000007" width="1.8" height="1.8" rx="0.3" fill="#3a3f4c"/><rect x="75.1" y="459.30000000000007" width="1.8" height="1.8" rx="0.3" fill="#3a3f4c"/><rect x="75.1" y="462.30000000000007" width="1.8" height="1.8" rx="0.3" fill="#3a3f4c"/><g transform="translate(47.1 504.75) rotate(-45)"><path d="M0.2 0 L3.3 -1.6 H11.4 A1.6 1.6 0 0 1 11.4 1.6 H3.3 Z M3.3 -1.6 V1.6" fill="none" stroke="#2e3340" stroke-width="1" stroke-linejoin="round"/></g><rect x="75.1" y="496.30000000000007" width="1.8" height="1.8" rx="0.3" fill="#3a3f4c"/><rect x="75.1" y="499.30000000000007" width="1.8" height="1.8" rx="0.3" fill="#3a3f4c"/><rect x="75.1" y="502.30000000000007" width="1.8" height="1.8" rx="0.3" fill="#3a3f4c"/><g transform="translate(47.1 544.75) rotate(-45)"><path d="M0.2 0 L3.3 -1.6 H11.4 A1.6 1.6 0 0 1 11.4 1.6 H3.3 Z M3.3 -1.6 V1.6" fill="none" stroke="#2e3340" stroke-width="1" stroke-linejoin="round"/></g><rect x="75.1" y="536.3000000000001" width="1.8" height="1.8" rx="0.3" fill="#3a3f4c"/><rect x="75.1" y="539.3000000000001" width="1.8" height="1.8" rx="0.3" fill="#3a3f4c"/><rect x="75.1" y="542.3000000000001" width="1.8" height="1.8" rx="0.3" fill="#3a3f4c"/><g transform="translate(47.1 584.75) rotate(-45)"><path d="M0.2 0 L3.3 -1.6 H11.4 A1.6 1.6 0 0 1 11.4 1.6 H3.3 Z M3.3 -1.6 V1.6" fill="none" stroke="#2e3340" stroke-width="1" stroke-linejoin="round"/></g><rect x="75.1" y="576.3000000000001" width="1.8" height="1.8" rx="0.3" fill="#3a3f4c"/><rect x="75.1" y="579.3000000000001" width="1.8" height="1.8" rx="0.3" fill="#3a3f4c"/><rect x="75.1" y="582.3000000000001" width="1.8" height="1.8" rx="0.3" fill="#3a3f4c"/><g transform="translate(47.1 624.75) rotate(-45)"><path d="M0.2 0 L3.3 -1.6 H11.4 A1.6 1.6 0 0 1 11.4 1.6 H3.3 Z M3.3 -1.6 V1.6" fill="none" stroke="#2e3340" stroke-width="1" stroke-linejoin="round"/></g><rect x="75.1" y="616.3000000000001" width="1.8" height="1.8" rx="0.3" fill="#3a3f4c"/><rect x="75.1" y="619.3000000000001" width="1.8" height="1.8" rx="0.3" fill="#3a3f4c"/><rect x="75.1" y="622.3000000000001" width="1.8" height="1.8" rx="0.3" fill="#3a3f4c"/><g transform="translate(47.1 664.75) rotate(-45)"><path d="M0.2 0 L3.3 -1.6 H11.4 A1.6 1.6 0 0 1 11.4 1.6 H3.3 Z M3.3 -1.6 V1.6" fill="none" stroke="#2e3340" stroke-width="1" stroke-linejoin="round"/></g><rect x="75.1" y="656.3000000000001" width="1.8" height="1.8" rx="0.3" fill="#3a3f4c"/><rect x="75.1" y="659.3000000000001" width="1.8" height="1.8" rx="0.3" fill="#3a3f4c"/><rect x="75.1" y="662.3000000000001" width="1.8" height="1.8" rx="0.3" fill="#3a3f4c"/><g transform="translate(47.1 704.75) rotate(-45)"><path d="M0.2 0 L3.3 -1.6 H11.4 A1.6 1.6 0 0 1 11.4 1.6 H3.3 Z M3.3 -1.6 V1.6" fill="none" stroke="#2e3340" stroke-width="1" stroke-linejoin="round"/></g><rect x="75.1" y="696.3000000000001" width="1.8" height="1.8" rx="0.3" fill="#3a3f4c"/><rect x="75.1" y="699.3000000000001" width="1.8" height="1.8" rx="0.3" fill="#3a3f4c"/><rect x="75.1" y="702.3000000000001" width="1.8" height="1.8" rx="0.3" fill="#3a3f4c"/></svg>
</div>
<svg class="i" style="left:118px;top:184px;" width="18" height="18" viewBox="118 184 18 18"><path d="M130.5 189.4 A4.4 4.4 0 1 0 125.5 195.65" fill="none" stroke="#30338c" stroke-width="1.15" stroke-linejoin="round" stroke-linecap="round"/><path d="M123.6 194.4 L121 196.8" fill="none" stroke="#30338c" stroke-width="1.15" stroke-linejoin="round" stroke-linecap="round"/><path d="M125.2 191.4 H131.8 L129.7 194.3 V196.9 L127.6 197.8 V194.3 Z" fill="none" stroke="#30338c" stroke-width="1.15" stroke-linejoin="round" stroke-linecap="round"/></svg>
<svg class="i" style="left:278px;top:184px;" width="16" height="14" viewBox="278 184 16 14"><path d="M282.1 186.8 V194.6 M279.9 192.4 L282.1 194.7 L284.3 192.4" fill="none" stroke="#2a2e3a" stroke-width="1"/><path d="M285.2 187.4 H290.8 M285.2 190.4 H289.4 M285.2 193.4 H288" fill="none" stroke="#2a2e3a" stroke-width="1"/></svg>
</div></body></html>
